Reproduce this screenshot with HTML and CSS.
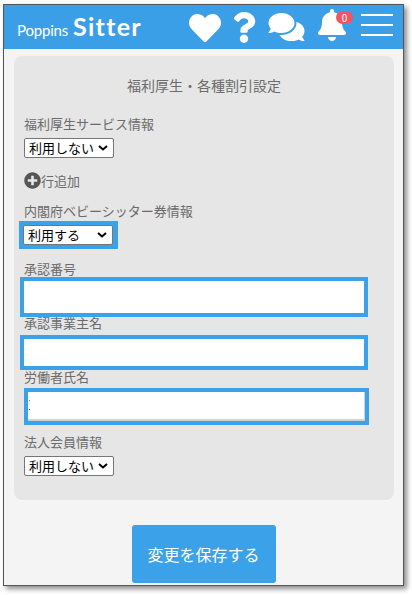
FILE: index.html
```html
<!DOCTYPE html>
<html lang="ja">
<head>
    <meta charset="UTF-8">
    <meta name="viewport" content="width=device-width, initial-scale=1.0">
    <title>Poppins Sitter</title>
    <link rel="stylesheet" href="styles.css">
</head>
<body>
    <div class="frame">
        <header class="header">
            <div class="logo"><span class="logo-small">Poppins</span><span class="logo-big">Sitter</span></div>
            <svg class="icon icon-heart" viewBox="0 0 512 512"><path d="M462.3 62.6C407.5 15.9 326 24.3 275.7 76.2L256 96.5l-19.7-20.3C186.1 24.3 104.5 15.9 49.7 62.6c-62.8 53.6-66.1 149.8-9.9 207.9l193.5 199.8c12.5 12.9 32.8 12.9 45.3 0l193.5-199.8c56.3-58.1 53-154.3-9.8-207.9z"/></svg>
            <svg class="icon icon-question" viewBox="0 0 384 512"><path d="M202.021 0C122.202 0 70.503 32.703 29.914 91.026c-7.363 10.58-5.093 25.086 5.178 32.874l43.138 32.709c10.373 7.865 25.132 6.026 33.253-4.148 25.049-31.381 43.63-49.449 82.757-49.449 30.764 0 68.816 19.799 68.816 49.631 0 22.552-18.617 34.134-48.993 51.164-35.423 19.86-82.299 44.576-82.299 106.405V320c0 13.255 10.745 24 24 24h72.471c13.255 0 24-10.745 24-24v-5.773c0-42.86 125.268-44.645 125.268-160.627C377.504 66.256 286.902 0 202.021 0zM192 373.459c-38.196 0-69.271 31.075-69.271 69.271 0 38.195 31.075 69.27 69.271 69.27s69.271-31.075 69.271-69.271-31.075-69.27-69.271-69.27z"/></svg>
            <svg class="icon icon-comments" viewBox="0 0 576 512"><path d="M416 192c0-88.4-93.1-160-208-160S0 103.6 0 192c0 34.3 14.1 65.9 38 92-13.4 30.2-35.5 54.2-35.8 54.5-2.2 2.3-2.8 5.7-1.5 8.7S4.8 352 8 352c36.6 0 66.9-12.3 88.7-25 32.2 15.7 70.3 25 111.3 25 114.9 0 208-71.6 208-160zm122 220c23.9-26 38-57.7 38-92 0-66.9-53.5-124.2-129.3-148.1.9 6.6 1.3 13.3 1.3 20.1 0 105.9-107.7 192-240 192-10.8 0-21.3-.8-31.7-1.9C207.8 439.6 281.8 480 368 480c41 0 79.1-9.2 111.3-25 21.8 12.7 52.1 25 88.7 25 3.2 0 6.1-1.9 7.3-4.8 1.3-2.9.7-6.3-1.5-8.7-.3-.3-22.4-24.2-35.8-54.5z"/></svg>
            <div class="bell">
                <svg class="icon icon-bell" viewBox="0 0 448 512"><path d="M224 512c35.32 0 63.97-28.65 63.97-64H160.03c0 35.35 28.65 64 63.97 64zm215.39-149.71c-19.32-20.76-55.47-51.99-55.47-154.29 0-77.7-54.48-139.9-127.94-155.16V32c0-17.67-14.32-32-31.98-32s-31.98 14.33-31.98 32v20.84C118.56 68.1 64.08 130.3 64.08 208c0 102.3-36.15 133.53-55.47 154.29-6 6.45-8.66 14.16-8.61 21.71.11 16.4 12.98 32 32.1 32h383.8c19.12 0 32-15.6 32.1-32 .05-7.55-2.61-15.27-8.61-21.71z"/></svg>
                <span class="badge">0</span>
            </div>
            <div class="menu"><span></span><span></span><span></span></div>
        </header>

        <main class="panel">
            <h2 class="panel-title">福利厚生・各種割引設定</h2>

            <label class="label">福利厚生サービス情報</label>
            <select class="select"><option>利用しない</option></select>

            <div class="add-row">
                <svg class="add-icon" viewBox="0 0 512 512"><path d="M256 8C119 8 8 119 8 256s111 248 248 248 248-111 248-248S393 8 256 8zm144 276c0 6.6-5.4 12-12 12h-92v92c0 6.6-5.4 12-12 12h-56c-6.6 0-12-5.4-12-12v-92h-92c-6.6 0-12-5.4-12-12v-56c0-6.6 5.4-12 12-12h92v-92c0-6.6 5.4-12 12-12h56c6.6 0 12 5.4 12 12v92h92c6.6 0 12 5.4 12 12v56z"/></svg>行追加
            </div>

            <label class="label label-tight">内閣府ベビーシッター券情報</label>
            <div class="select-mark"><select class="select"><option>利用する</option></select></div>

            <label class="label label-number">承認番号</label>
            <input class="input" type="text">

            <label class="label label-owner">承認事業主名</label>
            <input class="input input-short" type="text">

            <label class="label label-worker">労働者氏名</label>
            <div class="input-worker"></div>

            <label class="label label-corp">法人会員情報</label>
            <select class="select"><option>利用しない</option></select>
        </main>

        <div class="actions">
            <button class="save-button">変更を保存する</button>
        </div>
    </div>
</body>
</html>
```

FILE: styles.css
```css
html, body {
    height: 100%;
}

body {
    margin: 0;
    padding: 4px 0 0 3px;
    box-sizing: border-box;
    background: #fff;
    font-family: "Noto Sans CJK JP", "Noto Sans", sans-serif;
    color: #6b6b6b;
    overflow: hidden;
}

.frame {
    width: 401px;
    height: 582px;
    box-sizing: border-box;
    border: 1px solid #555;
    background: #f4f4f4;
    box-shadow: 3px 3px 5px rgba(0, 0, 0, 0.45);
}

.header {
    height: 44px;
    display: flex;
    align-items: center;
    background: #3b9fe8;
    padding-left: 13px;
    fill: #fff;
    color: #fff;
}

.logo {
    width: 172px;
    display: flex;
    align-items: baseline;
    font-family: Lato, sans-serif;
    margin-bottom: 2px;
}

.logo-small {
    font-size: 15px;
    letter-spacing: -0.2px;
    margin-right: 5px;
}

.logo-big {
    font-size: 25px;
    font-weight: 700;
    letter-spacing: 1.3px;
}

.icon {
    display: block;
    flex: none;
}

.icon-heart {
    width: 32px;
    height: 32px;
    margin-right: 11px;
    margin-top: 1px;
}

.icon-question {
    width: 24px;
    height: 31px;
    margin-right: 12px;
}

.icon-comments {
    width: 37px;
    height: 32px;
    margin-right: 12px;
}

.bell {
    position: relative;
    width: 44px;
    padding-left: 1px;
    box-sizing: border-box;
}

.icon-bell {
    width: 28px;
    height: 32px;
    margin-bottom: 4px;
}

.badge {
    position: absolute;
    top: 2px;
    left: 19px;
    width: 17px;
    height: 13px;
    border-radius: 7px;
    background: #f5535f;
    color: #fff;
    font-size: 10px;
    line-height: 13px;
    text-align: center;
}

.menu {
    width: 32px;
    display: flex;
    flex-direction: column;
    gap: 8px;
    margin-bottom: 4px;
}

.menu span {
    height: 2px;
    background: #fff;
}

.panel {
    margin: 7px 9px 0 10px;
    height: 444px;
    box-sizing: border-box;
    padding: 19px 10px 0;
    background: #e6e6e6;
    border-radius: 8px;
}

.panel-title {
    margin: 0 0 19px;
    font-size: 14px;
    font-weight: 400;
    line-height: 20px;
    text-align: center;
}

.label {
    display: block;
    font-size: 13px;
    line-height: 20px;
    margin-bottom: 4px;
}

.select {
    display: block;
    width: 90px;
    height: 20px;
    box-sizing: border-box;
    padding: 0 0 1px 4px;
    border: 1px solid #767676;
    border-radius: 2px;
    appearance: none;
    background: #fff url("data:image/svg+xml,%3Csvg xmlns='http://www.w3.org/2000/svg' width='10' height='6'%3E%3Cpath d='M1 1l4 3.5L9 1' fill='none' stroke='%23000' stroke-width='2'/%3E%3C/svg%3E") no-repeat right 5px center;
    color: #000;
    font-family: inherit;
    font-size: 13px;
    line-height: 16px;
}

.add-row {
    display: flex;
    align-items: center;
    height: 20px;
    margin-top: 12px;
    font-size: 13px;
}

.add-icon {
    width: 17px;
    height: 17px;
    fill: #555;
}

.label-tight {
    margin: 11px 0 0;
}

.select-mark {
    width: 91px;
    margin-left: -5px;
    padding: 4px;
    background: #3ba2ea;
}

.label-number {
    line-height: 18px;
    margin: 11px 0 -1px;
}

.label-owner {
    line-height: 18px;
    margin: -3px 0 3px;
}

.label-worker {
    line-height: 18px;
    margin: -2px 0 2px;
}

.label-corp {
    margin: 7px 0 4px;
}

.input {
    display: block;
    width: 348px;
    height: 40px;
    margin-left: -4px;
    box-sizing: border-box;
    padding: 0;
    border: 4px solid #3ba2ea;
    border-radius: 0;
    background: #fff;
    outline: none;
}

.input-short {
    height: 35px;
}

.input-worker {
    position: relative;
    width: 345px;
    height: 37px;
    box-sizing: border-box;
    border: 4px solid #3ba2ea;
    background: #fff;
    box-shadow: inset -1px -2px 1px #d0d0d0;
}

/* two stray specks at the left edge of the worker field */
.input-worker::before {
    content: "";
    position: absolute;
    left: 1px;
    top: 8px;
    width: 1px;
    height: 1px;
    background: #888;
    box-shadow: 0 9px 0 #666;
}

.actions {
    display: flex;
    justify-content: center;
    margin-top: 25px;
}

.save-button {
    width: 144px;
    height: 58px;
    border: none;
    border-radius: 3px;
    background: #3ba2ea;
    color: #fff;
    font-family: inherit;
    font-size: 16px;
}
```
